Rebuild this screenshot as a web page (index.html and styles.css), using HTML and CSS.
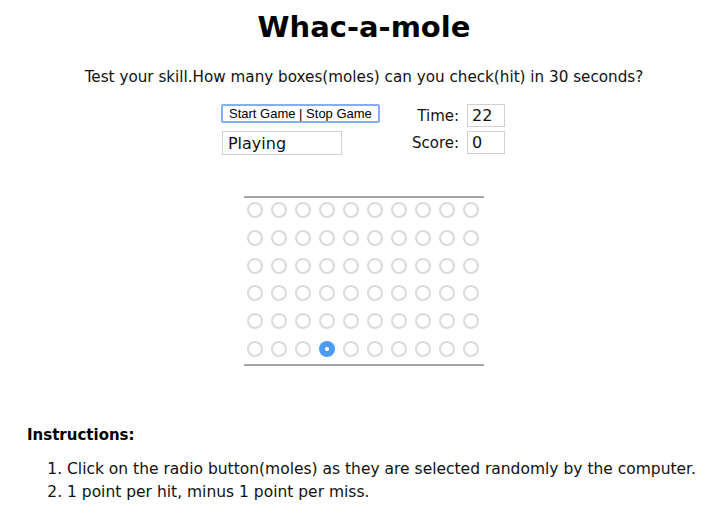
FILE: index.html
```html
<!DOCTYPE html>
<html>
<head>
<meta charset="utf-8">
<title>Whac-a-mole</title>
<link rel="stylesheet" href="styles.css">
</head>
<body>
<div class="page">
  <h1 class="title">Whac-a-mole</h1>
  <p class="subtitle">Test your skill.How many boxes(moles) can you check(hit) in 30 seconds?</p>
  <div class="controls">
    <div class="left">
      <button class="start-btn" type="button">Start Game | Stop Game</button>
      <input class="status" type="text" value="Playing">
    </div>
    <div class="right">
      <div class="stat"><label>Time:</label><input class="num" type="text" value="22"></div>
      <div class="stat"><label>Score:</label><input class="num" type="text" value="0"></div>
    </div>
  </div>
  <div class="board">
    <div class="row"><input type="radio" class="mole"><input type="radio" class="mole"><input type="radio" class="mole"><input type="radio" class="mole"><input type="radio" class="mole"><input type="radio" class="mole"><input type="radio" class="mole"><input type="radio" class="mole"><input type="radio" class="mole"><input type="radio" class="mole"></div>
    <div class="row"><input type="radio" class="mole"><input type="radio" class="mole"><input type="radio" class="mole"><input type="radio" class="mole"><input type="radio" class="mole"><input type="radio" class="mole"><input type="radio" class="mole"><input type="radio" class="mole"><input type="radio" class="mole"><input type="radio" class="mole"></div>
    <div class="row"><input type="radio" class="mole"><input type="radio" class="mole"><input type="radio" class="mole"><input type="radio" class="mole"><input type="radio" class="mole"><input type="radio" class="mole"><input type="radio" class="mole"><input type="radio" class="mole"><input type="radio" class="mole"><input type="radio" class="mole"></div>
    <div class="row"><input type="radio" class="mole"><input type="radio" class="mole"><input type="radio" class="mole"><input type="radio" class="mole"><input type="radio" class="mole"><input type="radio" class="mole"><input type="radio" class="mole"><input type="radio" class="mole"><input type="radio" class="mole"><input type="radio" class="mole"></div>
    <div class="row"><input type="radio" class="mole"><input type="radio" class="mole"><input type="radio" class="mole"><input type="radio" class="mole"><input type="radio" class="mole"><input type="radio" class="mole"><input type="radio" class="mole"><input type="radio" class="mole"><input type="radio" class="mole"><input type="radio" class="mole"></div>
    <div class="row"><input type="radio" class="mole"><input type="radio" class="mole"><input type="radio" class="mole"><input type="radio" class="mole" checked><input type="radio" class="mole"><input type="radio" class="mole"><input type="radio" class="mole"><input type="radio" class="mole"><input type="radio" class="mole"><input type="radio" class="mole"></div>
  </div>
  <div class="instructions">
    <h3 class="inst-title">Instructions:</h3>
    <ol class="inst-list">
      <li>Click on the radio button(moles) as they are selected randomly by the computer.</li>
      <li>1 point per hit, minus 1 point per miss.</li>
    </ol>
  </div>
</div>
</body>
</html>
```

FILE: styles.css
```css
* { box-sizing: border-box; }
html, body { margin: 0; padding: 0; background: #fff; }
body {
  font-family: "DejaVu Sans", "Liberation Sans", sans-serif;
  color: #111;
  font-size: 15px;
}
.page {
  padding: 0 0 0 9px;
  width: 719px;
}
.title {
  margin: 0;
  padding-top: 7px;
  text-align: center;
  font-size: 29px;
  line-height: 40px;
  font-weight: bold;
  color: #000;
}
.subtitle {
  margin: 20px 0 0;
  text-align: center;
  line-height: 20px;
  font-size: 15.2px;
}
.controls {
  display: flex;
  justify-content: center;
  gap: 32px;
  margin-top: 17px;
  padding-right: 2px;
}
.left {
  display: flex;
  flex-direction: column;
  align-items: flex-start;
  gap: 8px;
  width: 159px;
}
.start-btn {
  width: 159px;
  height: 19px;
  padding: 0;
  border: 2px solid #85aef0;
  border-radius: 2px;
  background: #fff;
  font-family: "Liberation Sans", sans-serif;
  font-size: 13px;
  color: #000;
  line-height: 15px;
}
.status {
  width: 120px;
  height: 24px;
  margin-left: 1px;
  border: 1px solid #d0d0d0;
  padding: 0 5px;
  font-family: inherit;
  font-size: 16px;
  color: #111;
}
.right {
  display: flex;
  flex-direction: column;
  align-items: flex-end;
  gap: 4px;
}
.stat {
  display: flex;
  align-items: center;
  gap: 8px;
}
.stat label {
  font-size: 15px;
}
.num {
  width: 38px;
  height: 23px;
  border: 1px solid #d0d0d0;
  padding: 0 4px;
  font-family: inherit;
  font-size: 16px;
  color: #111;
}
.board {
  width: 240px;
  margin: 41px auto 0;
  border-top: 2px solid #a3a3a3;
  border-bottom: 2px solid #a3a3a3;
  padding: 4px 0 7px 3px;
  display: flex;
  flex-direction: column;
  gap: 11.8px;
}
.row {
  display: flex;
  gap: 8px;
}
.mole {
  appearance: none;
  -webkit-appearance: none;
  margin: 0;
  width: 16px;
  height: 16px;
  border-radius: 50%;
  border: 2px solid #dadada;
  background: #fff;
}
.mole:checked {
  border: none;
  background: radial-gradient(circle, #fff 0 1.6px, #4c9bf6 2.4px);
}
.instructions {
  margin-top: 59px;
  padding-left: 18px;
}
.inst-title {
  margin: 0;
  font-size: 15px;
  font-weight: bold;
  color: #000;
  line-height: 20px;
}
.inst-list {
  margin: 13px 0 0;
  padding-left: 40px;
  line-height: 23px;
  font-size: 15.5px;
}
```
